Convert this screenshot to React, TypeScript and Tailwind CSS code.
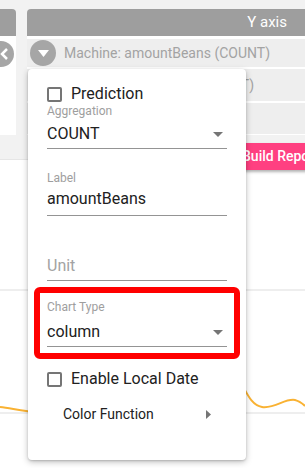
import React from 'react'

function Checkbox() {
  return <span className="w-[15px] h-[15px] shrink-0 border-2 border-[#757575] rounded-[2px] bg-white" />
}

function Caret() {
  return (
    <svg width="10" height="5" viewBox="0 0 10 5" className="shrink-0">
      <path d="M0 0 L10 0 L5 5 Z" fill="#757575" />
    </svg>
  )
}

export default function App() {
  return (
    <div className="relative w-[305px] h-[468px] overflow-hidden bg-white" style={{ fontFamily: 'Roboto, "Noto Sans", sans-serif' }}>
      {/* top toolbar area */}
      <div className="bg-[#f2f2f2] pt-[9px] h-[160px] border-b border-[#e6e6e6]">
        <div className="flex gap-[11px]">
          <div className="w-[16px] shrink-0">
            <div className="h-[27px] bg-[#9e9e9e] rounded-tr-[4px]" />
            <div className="h-[99px] bg-white pt-[5px] overflow-hidden">
              <span className="ml-[-12px] w-[26px] h-[26px] rounded-full bg-[#a6a6a6] flex items-center justify-end pr-[6px]">
                <svg width="8" height="12" viewBox="0 0 8 12">
                  <path d="M7 1 L2 6 L7 11" stroke="#fff" strokeWidth="2.5" fill="none" />
                </svg>
              </span>
            </div>
          </div>
          <div className="flex-1 min-w-0">
            <div className="h-[27px] bg-[#9e9e9e] rounded-tl-[4px] flex items-center justify-end pr-[18px]">
              <span className="text-white text-[15px]">Y axis</span>
            </div>
            <div className="h-[99px] bg-white pt-[3px] flex flex-col gap-[2px]">
              <div className="flex items-center h-[28px] bg-[#eeeeee] pl-[3px] gap-[8px] overflow-hidden whitespace-nowrap">
                <span className="w-[26px] h-[26px] rounded-full bg-[#a6a6a6] flex items-center justify-center shrink-0">
                  <svg width="11" height="7" viewBox="0 0 11 7">
                    <path d="M0 0 L11 0 L5.5 7 Z" fill="#fff" />
                  </svg>
                </span>
                <span className="text-[14px] text-[#a3a3a3]">Machine: amountBeans (COUNT)</span>
              </div>
              <div className="flex items-center h-[32px] bg-[#eeeeee] overflow-hidden whitespace-nowrap pl-[21px]">
                <span className="text-[14px] text-[#a3a3a3]">Machine: amountBeans (COUNT)</span>
              </div>
              <div className="h-[31px] bg-[#eeeeee]" />
            </div>
          </div>
        </div>
        <div className="h-[25px] pt-[8px]">
          <div className="ml-[234px] w-max h-[27px] bg-[#ff4081] text-white text-[14px] font-medium flex items-center px-[8px] shadow-[0_2px_3px_rgba(0,0,0,0.3)] rounded-[2px]">
            Build Report
          </div>
        </div>
      </div>

      {/* chart area */}
      <svg width="305" height="307" viewBox="0 0 305 307" className="block">
        <line x1="0" y1="130" x2="305" y2="130" stroke="#eeeeee" strokeWidth="2" />
        <line x1="0" y1="253" x2="305" y2="253" stroke="#eeeeee" strokeWidth="2" />
        <path
          d="M0 247 C12 248 22 252 40 252 C80 252 120 200 170 205 C210 210 228 200 238 218 C246 230 250 245 262 247 C275 249 285 238 295 240 C300 241 303 244 305 246"
          stroke="#f9b233"
          strokeWidth="2"
          fill="none"
        />
      </svg>

      {/* dropdown menu */}
      <div className="absolute left-[28px] top-[69px] w-[218px] h-[391px] bg-white rounded-[4px] shadow-[0_2px_6px_rgba(0,0,0,0.25),0_1px_2px_rgba(0,0,0,0.15)] px-[19px] pt-[16px] flex flex-col">
        <div className="flex items-center gap-[9px] h-[18px]">
          <Checkbox />
          <span className="text-[16px] leading-[18px] text-[#212121]">Prediction</span>
        </div>

        <div className="mt-[1px]">
          <div className="text-[12px] leading-[14px] text-[#9e9e9e]">Aggregation</div>
          <div className="mt-[6px] pb-[4px] border-b border-[#949494] flex items-center justify-between pr-[4px]">
            <span className="text-[16px] leading-[20px] text-[#212121]">COUNT</span>
            <Caret />
          </div>
        </div>

        <div className="mt-[22px]">
          <div className="text-[12px] leading-[14px] text-[#9e9e9e]">Label</div>
          <div className="mt-[4px] pb-[6px] border-b border-[#949494]">
            <div className="text-[16px] leading-[20px] text-[#212121]">amountBeans</div>
          </div>
        </div>

        <div className="mt-[40px] pb-[4px] border-b border-[#949494]">
          <div className="text-[16px] leading-[20px] text-[#a3a3a3]">Unit</div>
        </div>

        <div className="mt-[6px] mx-[-13px] border-[6px] border-[#ff0000] rounded-[6px] px-[7px] pt-[7px] pb-[6px]">
          <div className="text-[12px] leading-[14px] text-[#9e9e9e]">Chart Type</div>
          <div className="mt-[8px] pb-[4px] border-b border-[#949494] flex items-center justify-between pr-[4px]">
            <span className="text-[16px] leading-[20px] text-[#212121]">column</span>
            <Caret />
          </div>
        </div>

        <div className="mt-[11px] flex items-center gap-[9px] h-[18px]">
          <Checkbox />
          <span className="text-[16px] leading-[18px] text-[#212121]">Enable Local Date</span>
        </div>

        <div className="mt-[16px] h-[20px] flex items-center justify-between pl-[16px] pr-[16px]">
          <span className="text-[14px] leading-[20px] text-[#212121]">Color Function</span>
          <svg width="5" height="9" viewBox="0 0 5 9">
            <path d="M0 0 L5 4.5 L0 9 Z" fill="#757575" />
          </svg>
        </div>
      </div>
    </div>
  )
}
